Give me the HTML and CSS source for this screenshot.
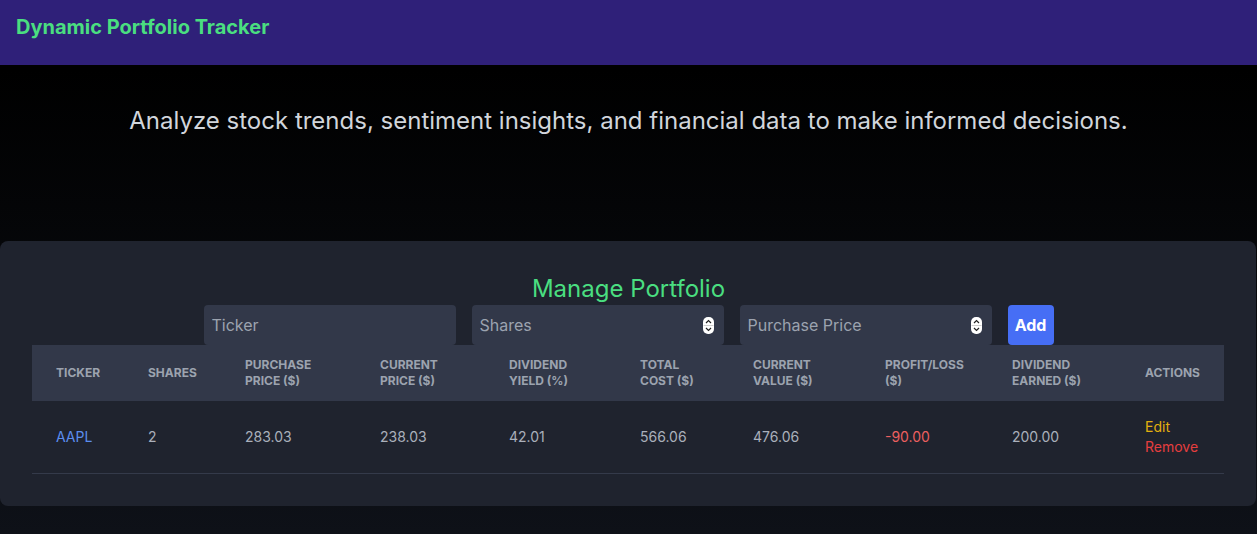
FILE: index.html
```html
<!DOCTYPE html>
<html lang="en">
<head>
<meta charset="utf-8">
<title>Dynamic Portfolio Tracker</title>
<link rel="stylesheet" href="styles.css">
</head>
<body>
<header class="topbar">
  <h1 class="brand">Dynamic Portfolio Tracker</h1>
</header>
<main class="main">
  <p class="tagline">Analyze stock trends, sentiment insights, and financial data to make informed decisions.</p>
  <section class="card">
    <h2 class="card-title">Manage Portfolio</h2>
    <form class="entry-form">
      <div class="field"><input class="field-input" type="text" placeholder="Ticker"></div>
      <div class="field"><input class="field-input" type="text" placeholder="Shares">
        <svg class="spin" width="11" height="17" viewBox="0 0 11 17"><rect x="0" y="0" width="11" height="17" rx="5" fill="#ffffff"/><line x1="0.5" y1="8.5" x2="10.5" y2="8.5" stroke="#cfcfcf" stroke-width="1"/><path d="M3 6 L5.5 3.5 L8 6" fill="none" stroke="#222" stroke-width="1.2"/><path d="M3 11 L5.5 13.5 L8 11" fill="none" stroke="#222" stroke-width="1.2"/></svg>
      </div>
      <div class="field"><input class="field-input" type="text" placeholder="Purchase Price">
        <svg class="spin" width="11" height="17" viewBox="0 0 11 17"><rect x="0" y="0" width="11" height="17" rx="5" fill="#ffffff"/><line x1="0.5" y1="8.5" x2="10.5" y2="8.5" stroke="#cfcfcf" stroke-width="1"/><path d="M3 6 L5.5 3.5 L8 6" fill="none" stroke="#222" stroke-width="1.2"/><path d="M3 11 L5.5 13.5 L8 11" fill="none" stroke="#222" stroke-width="1.2"/></svg>
      </div>
      <button class="add-btn" type="button">Add</button>
    </form>
    <table class="holdings">
      <colgroup>
        <col style="width:92px"><col style="width:97px"><col style="width:135px"><col style="width:129px"><col style="width:131px"><col style="width:113px"><col style="width:132px"><col style="width:127px"><col style="width:133px"><col style="width:103px">
      </colgroup>
      <thead>
        <tr>
          <th>Ticker</th>
          <th>Shares</th>
          <th>Purchase<br>Price ($)</th>
          <th>Current<br>Price ($)</th>
          <th>Dividend<br>Yield (%)</th>
          <th>Total<br>Cost ($)</th>
          <th>Current<br>Value ($)</th>
          <th>Profit/Loss<br>($)</th>
          <th>Dividend<br>Earned ($)</th>
          <th>Actions</th>
        </tr>
      </thead>
      <tbody>
        <tr>
          <td class="ticker">AAPL</td>
          <td>2</td>
          <td>283.03</td>
          <td>238.03</td>
          <td>42.01</td>
          <td>566.06</td>
          <td>476.06</td>
          <td class="loss">-90.00</td>
          <td>200.00</td>
          <td class="actions"><span class="edit">Edit</span><span class="remove">Remove</span></td>
        </tr>
      </tbody>
    </table>
  </section>
</main>
</body>
</html>
```

FILE: styles.css
```css
* { box-sizing: border-box; }
html, body { margin: 0; padding: 0; }
body {
  font-family: Inter, "Noto Sans", sans-serif;
  background: linear-gradient(to bottom, #000000 0px, #000000 70px, #0e1118 534px);
  min-height: 534px;
  color: #d1d5db;
}
.topbar {
  height: 65px;
  background: #2f2079;
  padding: 13px 16px 0;
}
.brand {
  margin: 0;
  font-size: 20px;
  line-height: 28px;
  font-weight: 700;
  color: #4ade80;
}
.main {
  padding-top: 40px;
}
.tagline {
  margin: 0;
  text-align: center;
  font-size: 24px;
  line-height: 32px;
  color: #d1d5db;
}
.card {
  margin-top: 104px;
  margin-right: 1px;
  background: #1f232e;
  border-radius: 8px;
  padding: 31px 31px 32px 32px;
}
.card-title {
  margin: 0;
  text-align: center;
  font-size: 24px;
  line-height: 33px;
  font-weight: 400;
  color: #4ade80;
}
.entry-form {
  display: flex;
  justify-content: center;
  gap: 16px;
}
.field {
  width: 252px;
  height: 40px;
  background: #323849;
  border-radius: 4px;
  display: flex;
  align-items: center;
  padding: 0 10px 0 8px;
}
.field-input {
  flex: 1;
  min-width: 0;
  border: none;
  outline: none;
  background: transparent;
  font-family: inherit;
  font-size: 16px;
  color: #d1d5db;
  padding: 0;
}
.field-input::placeholder { color: #9ca3af; }
.spin { flex: none; display: block; }
.add-btn {
  width: 46px;
  height: 40px;
  border: none;
  border-radius: 4px;
  background: #466ef5;
  color: #ffffff;
  font-family: inherit;
  font-size: 16px;
  font-weight: 700;
  padding: 0;
}
.holdings {
  width: 1192px;
  table-layout: fixed;
  border-collapse: collapse;
}
.holdings th {
  background: #323849;
  text-align: left;
  font-size: 12px;
  line-height: 16px;
  font-weight: 700;
  text-transform: uppercase;
  letter-spacing: 0;
  color: #9ca3af;
  padding: 12px 24px;
  height: 56px;
  vertical-align: middle;
}
.holdings td {
  font-size: 14px;
  line-height: 20px;
  color: #aab0bb;
  padding: 16px 24px;
  border-bottom: 1px solid #343a4a;
  vertical-align: middle;
}
.holdings td.ticker { color: #5b8def; }
.holdings td.loss { color: #ec5f5f; }
.actions span { display: block; }
.edit { color: #e2b00f; }
.remove { color: #e53e3e; }
```
